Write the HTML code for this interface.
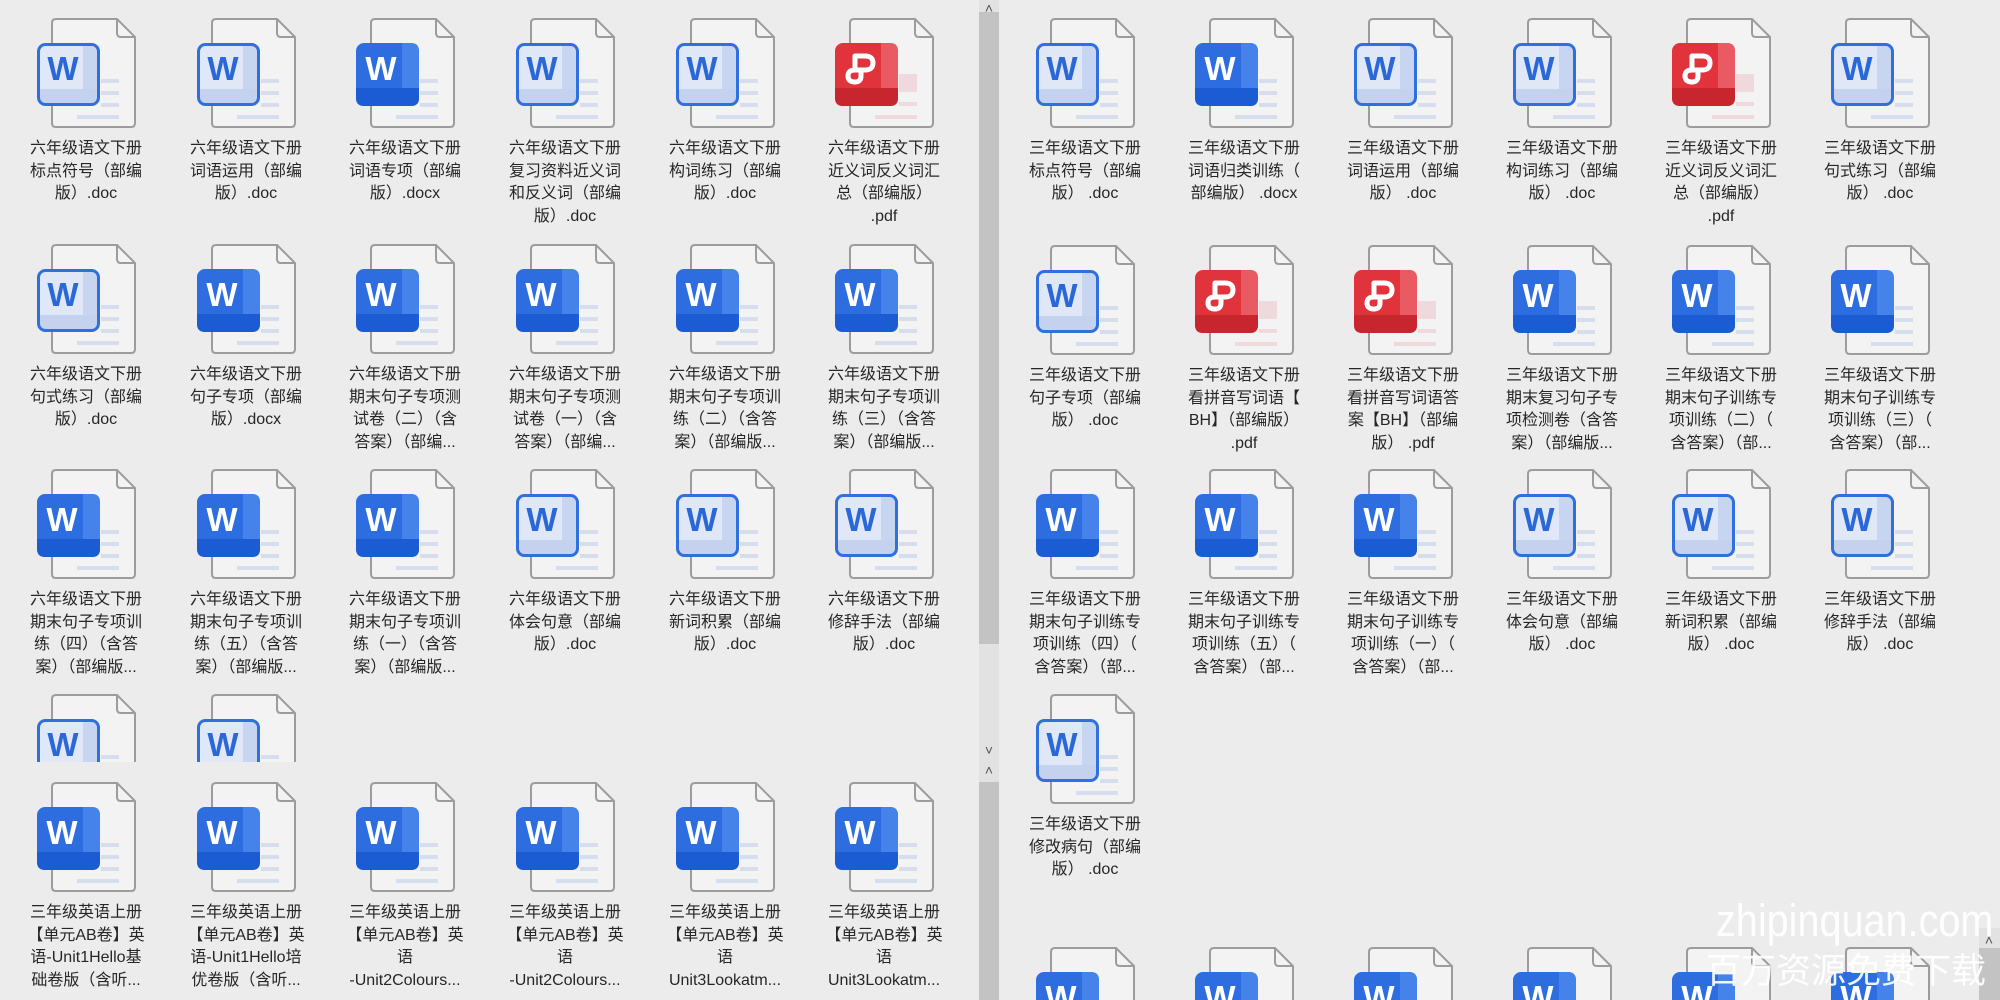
<!DOCTYPE html>
<html><head><meta charset="utf-8">
<style>
html,body{margin:0;padding:0;}
html{width:2000px;height:1000px;overflow:hidden;}
body{width:2000px;height:1000px;background:#ececec;position:relative;overflow:hidden;font-family:"Liberation Sans","Noto Sans CJK SC",sans-serif;color:#262626;}
.win{position:absolute;overflow:hidden;}
.it{position:absolute;width:180px;text-align:center;font-size:16px;line-height:22.5px;}
.it svg{display:block;margin:0 auto 10px;width:99px;height:110px;}
.sb{position:absolute;background:#e2e2e2;}
.th{position:absolute;background:#c3c3c3;}
.ar{position:absolute;font-size:14px;color:#555;width:20px;text-align:center;line-height:12px;}
.wm{position:absolute;color:rgba(255,255,255,0.93);font-family:"Liberation Sans","Noto Sans CJK SC",sans-serif;white-space:nowrap;}
</style></head><body>
<svg width="0" height="0" style="position:absolute">
<defs>
<g id="doc">
<path d="M15 5 Q15 1 19 1 H80 L98 19 V105 Q98 109 94 109 H19 Q15 109 15 105 Z" fill="#f3f3f3" stroke="#9c9c9c" stroke-width="2"/>
<path d="M80 1 V15 Q80 19 84 19 H98" fill="none" stroke="#9c9c9c" stroke-width="2"/>
</g>
<g id="wl">
<use href="#doc"/>
<rect x="64" y="61" width="18" height="4" fill="#d6ddec"/><rect x="64" y="73" width="18" height="4" fill="#d6ddec"/><rect x="64" y="85" width="18" height="4" fill="#d6ddec"/><rect x="40" y="97" width="42" height="4" fill="#d6ddec"/>
<rect x="1.5" y="26.5" width="60" height="60" rx="7" fill="#e0e8f7"/>
<rect x="46" y="28" width="14" height="57" fill="#c8d5f0"/>
<rect x="3" y="71" width="57" height="14" fill="#c4d2ef"/>
<rect x="1.5" y="26.5" width="60" height="60" rx="7" fill="none" stroke="#2f6fde" stroke-width="3"/>
<text x="26" y="62" text-anchor="middle" font-family="Liberation Sans,sans-serif" font-weight="bold" font-size="33" fill="#2a68d8">W</text>
</g>
<g id="wd">
<use href="#doc"/>
<rect x="64" y="61" width="18" height="4" fill="#d6ddec"/><rect x="64" y="73" width="18" height="4" fill="#d6ddec"/><rect x="64" y="85" width="18" height="4" fill="#d6ddec"/><rect x="40" y="97" width="42" height="4" fill="#d6ddec"/>
<rect x="0" y="25" width="63" height="63" rx="8" fill="#2d6de0"/>
<path d="M46 25 H55 Q63 25 63 33 V80 Q63 88 55 88 H46 Z" fill="#4583eb"/>
<path d="M0 70 H63 V80 Q63 88 55 88 H8 Q0 88 0 80 Z" fill="#1b5cd4"/>
<text x="25" y="62" text-anchor="middle" font-family="Liberation Sans,sans-serif" font-weight="bold" font-size="33" fill="#fff">W</text>
</g>
<g id="pdf">
<use href="#doc"/>
<rect x="64" y="56" width="18" height="18" fill="#efd9dc"/><rect x="64" y="84" width="18" height="4" fill="#efd9dc"/><rect x="40" y="97" width="42" height="4" fill="#efd9dc"/>
<rect x="0" y="25" width="63" height="63" rx="8" fill="#e1333c"/>
<path d="M46 25 H55 Q63 25 63 33 V80 Q63 88 55 88 H46 Z" fill="#ea5a62"/>
<path d="M0 70 H63 V80 Q63 88 55 88 H8 Q0 88 0 80 Z" fill="#c8262f"/>
<path d="M20 52 V38 H30 Q38 38 38 45 Q38 52 30 52 H20 Q13 52 13 58 Q13 64 20 64 Q26 64 26 58 V52" fill="none" stroke="#fff" stroke-width="5" stroke-linejoin="round"/>
</g>
</defs></svg>

<!-- Left top window -->
<div class="win" style="left:0;top:0;width:978px;height:762px;">
<div class="it" style="left:-4px;top:18px"><svg><use href="#wl"/></svg>六年级语文下册<br>标点符号（部编<br>版）.doc</div>
<div class="it" style="left:156px;top:18px"><svg><use href="#wl"/></svg>六年级语文下册<br>词语运用（部编<br>版）.doc</div>
<div class="it" style="left:315px;top:18px"><svg><use href="#wd"/></svg>六年级语文下册<br>词语专项（部编<br>版）.docx</div>
<div class="it" style="left:475px;top:18px"><svg><use href="#wl"/></svg>六年级语文下册<br>复习资料近义词<br>和反义词（部编<br>版）.doc</div>
<div class="it" style="left:635px;top:18px"><svg><use href="#wl"/></svg>六年级语文下册<br>构词练习（部编<br>版）.doc</div>
<div class="it" style="left:794px;top:18px"><svg><use href="#pdf"/></svg>六年级语文下册<br>近义词反义词汇<br>总（部编版）<br>.pdf</div>

<div class="it" style="left:-4px;top:244px"><svg><use href="#wl"/></svg>六年级语文下册<br>句式练习（部编<br>版）.doc</div>
<div class="it" style="left:156px;top:244px"><svg><use href="#wd"/></svg>六年级语文下册<br>句子专项（部编<br>版）.docx</div>
<div class="it" style="left:315px;top:244px"><svg><use href="#wd"/></svg>六年级语文下册<br>期末句子专项测<br>试卷（二）（含<br>答案）（部编...</div>
<div class="it" style="left:475px;top:244px"><svg><use href="#wd"/></svg>六年级语文下册<br>期末句子专项测<br>试卷（一）（含<br>答案）（部编...</div>
<div class="it" style="left:635px;top:244px"><svg><use href="#wd"/></svg>六年级语文下册<br>期末句子专项训<br>练（二）（含答<br>案）（部编版...</div>
<div class="it" style="left:794px;top:244px"><svg><use href="#wd"/></svg>六年级语文下册<br>期末句子专项训<br>练（三）（含答<br>案）（部编版...</div>

<div class="it" style="left:-4px;top:469px"><svg><use href="#wd"/></svg>六年级语文下册<br>期末句子专项训<br>练（四）（含答<br>案）（部编版...</div>
<div class="it" style="left:156px;top:469px"><svg><use href="#wd"/></svg>六年级语文下册<br>期末句子专项训<br>练（五）（含答<br>案）（部编版...</div>
<div class="it" style="left:315px;top:469px"><svg><use href="#wd"/></svg>六年级语文下册<br>期末句子专项训<br>练（一）（含答<br>案）（部编版...</div>
<div class="it" style="left:475px;top:469px"><svg><use href="#wl"/></svg>六年级语文下册<br>体会句意（部编<br>版）.doc</div>
<div class="it" style="left:635px;top:469px"><svg><use href="#wl"/></svg>六年级语文下册<br>新词积累（部编<br>版）.doc</div>
<div class="it" style="left:794px;top:469px"><svg><use href="#wl"/></svg>六年级语文下册<br>修辞手法（部编<br>版）.doc</div>

<div class="it" style="left:-4px;top:694px"><svg><use href="#wl"/></svg></div>
<div class="it" style="left:156px;top:694px"><svg><use href="#wl"/></svg></div>
</div>

<!-- Left bottom window -->
<div class="win" style="left:0;top:762px;width:978px;height:238px;">
<div class="it" style="left:-4px;top:20px"><svg><use href="#wd"/></svg>三年级英语上册<br>【单元AB卷】英<br>语-Unit1Hello基<br>础卷版（含听...</div>
<div class="it" style="left:156px;top:20px"><svg><use href="#wd"/></svg>三年级英语上册<br>【单元AB卷】英<br>语-Unit1Hello培<br>优卷版（含听...</div>
<div class="it" style="left:315px;top:20px"><svg><use href="#wd"/></svg>三年级英语上册<br>【单元AB卷】英<br>语<br>-Unit2Colours...</div>
<div class="it" style="left:475px;top:20px"><svg><use href="#wd"/></svg>三年级英语上册<br>【单元AB卷】英<br>语<br>-Unit2Colours...</div>
<div class="it" style="left:635px;top:20px"><svg><use href="#wd"/></svg>三年级英语上册<br>【单元AB卷】英<br>语<br>Unit3Lookatm...</div>
<div class="it" style="left:794px;top:20px"><svg><use href="#wd"/></svg>三年级英语上册<br>【单元AB卷】英<br>语<br>Unit3Lookatm...</div>
</div>

<!-- scrollbar -->
<div class="sb" style="left:979px;top:0;width:20px;height:1000px;"></div>
<div class="th" style="left:979px;top:12px;width:20px;height:632px;"></div>
<div class="th" style="left:979px;top:782px;width:20px;height:218px;"></div>
<div class="ar" style="left:979px;top:2px">&#x02C4;</div>
<div class="ar" style="left:979px;top:744px">&#x02C5;</div>
<div class="ar" style="left:979px;top:764px">&#x02C4;</div>

<!-- Right window -->
<div class="win" style="left:999px;top:0;width:1001px;height:1000px;">
<div class="it" style="left:-4px;top:18px"><svg><use href="#wl"/></svg>三年级语文下册<br>标点符号（部编<br>版） .doc</div>
<div class="it" style="left:155px;top:18px"><svg><use href="#wd"/></svg>三年级语文下册<br>词语归类训练（<br>部编版） .docx</div>
<div class="it" style="left:314px;top:18px"><svg><use href="#wl"/></svg>三年级语文下册<br>词语运用（部编<br>版） .doc</div>
<div class="it" style="left:473px;top:18px"><svg><use href="#wl"/></svg>三年级语文下册<br>构词练习（部编<br>版） .doc</div>
<div class="it" style="left:632px;top:18px"><svg><use href="#pdf"/></svg>三年级语文下册<br>近义词反义词汇<br>总（部编版）<br>.pdf</div>
<div class="it" style="left:791px;top:18px"><svg><use href="#wl"/></svg>三年级语文下册<br>句式练习（部编<br>版） .doc</div>

<div class="it" style="left:-4px;top:245px"><svg><use href="#wl"/></svg>三年级语文下册<br>句子专项（部编<br>版） .doc</div>
<div class="it" style="left:155px;top:245px"><svg><use href="#pdf"/></svg>三年级语文下册<br>看拼音写词语【<br>BH】（部编版）<br>.pdf</div>
<div class="it" style="left:314px;top:245px"><svg><use href="#pdf"/></svg>三年级语文下册<br>看拼音写词语答<br>案【BH】（部编<br>版） .pdf</div>
<div class="it" style="left:473px;top:245px"><svg><use href="#wd"/></svg>三年级语文下册<br>期末复习句子专<br>项检测卷（含答<br>案）（部编版...</div>
<div class="it" style="left:632px;top:245px"><svg><use href="#wd"/></svg>三年级语文下册<br>期末句子训练专<br>项训练（二）（<br>含答案）（部...</div>
<div class="it" style="left:791px;top:245px"><svg><use href="#wd"/></svg>三年级语文下册<br>期末句子训练专<br>项训练（三）（<br>含答案）（部...</div>

<div class="it" style="left:-4px;top:469px"><svg><use href="#wd"/></svg>三年级语文下册<br>期末句子训练专<br>项训练（四）（<br>含答案）（部...</div>
<div class="it" style="left:155px;top:469px"><svg><use href="#wd"/></svg>三年级语文下册<br>期末句子训练专<br>项训练（五）（<br>含答案）（部...</div>
<div class="it" style="left:314px;top:469px"><svg><use href="#wd"/></svg>三年级语文下册<br>期末句子训练专<br>项训练（一）（<br>含答案）（部...</div>
<div class="it" style="left:473px;top:469px"><svg><use href="#wl"/></svg>三年级语文下册<br>体会句意（部编<br>版） .doc</div>
<div class="it" style="left:632px;top:469px"><svg><use href="#wl"/></svg>三年级语文下册<br>新词积累（部编<br>版） .doc</div>
<div class="it" style="left:791px;top:469px"><svg><use href="#wl"/></svg>三年级语文下册<br>修辞手法（部编<br>版） .doc</div>

<div class="it" style="left:-4px;top:694px"><svg><use href="#wl"/></svg>三年级语文下册<br>修改病句（部编<br>版） .doc</div>

<div class="it" style="left:-4px;top:947px;height:53px;overflow:hidden"><svg><use href="#wd"/></svg></div>
<div class="it" style="left:155px;top:947px;height:53px;overflow:hidden"><svg><use href="#wd"/></svg></div>
<div class="it" style="left:314px;top:947px;height:53px;overflow:hidden"><svg><use href="#wd"/></svg></div>
<div class="it" style="left:473px;top:947px;height:53px;overflow:hidden"><svg><use href="#wd"/></svg></div>
<div class="it" style="left:632px;top:947px;height:53px;overflow:hidden"><svg><use href="#wd"/></svg></div>
<div class="it" style="left:791px;top:947px;height:53px;overflow:hidden"><svg><use href="#wd"/></svg></div>
</div>

<div class="sb" style="left:1979px;top:928px;width:21px;height:72px;"></div>
<div class="th" style="left:1979px;top:948px;width:21px;height:52px;"></div>
<div class="ar" style="left:1979px;top:934px">&#x02C4;</div>

<div class="wm" style="left:1716px;top:896px;font-size:45px;line-height:50px;transform:scaleX(0.88);transform-origin:left top;">zhipinquan.com</div>
<div class="wm" style="left:1706px;top:950px;font-size:35px;line-height:44px;">百万资源免费下载</div>
</body></html>
